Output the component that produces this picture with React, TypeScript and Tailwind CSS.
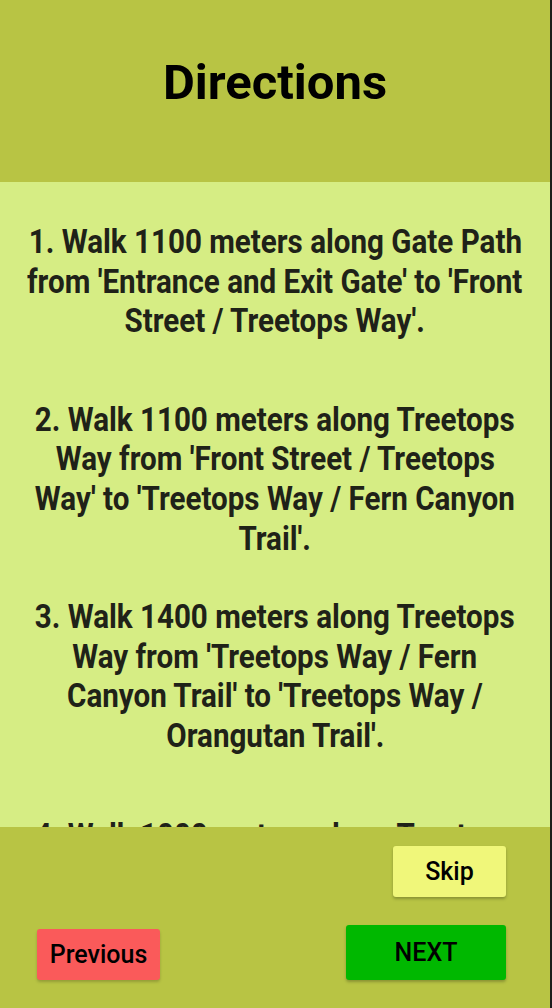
import React from "react";

const steps = [
  {
    mt: "mt-[40px]",
    lines: [
      "1. Walk 1100 meters along Gate Path",
      "from 'Entrance and Exit Gate' to 'Front",
      "Street / Treetops Way'.",
    ],
  },
  {
    mt: "mt-[59px]",
    lines: [
      "2. Walk 1100 meters along Treetops",
      "Way from 'Front Street / Treetops",
      "Way' to 'Treetops Way / Fern Canyon",
      "Trail'.",
    ],
  },
  {
    mt: "mt-[39px]",
    lines: [
      "3. Walk 1400 meters along Treetops",
      "Way from 'Treetops Way / Fern",
      "Canyon Trail' to 'Treetops Way /",
      "Orangutan Trail'.",
    ],
  },
  {
    mt: "mt-[60px]",
    lines: ["4. Walk 1000 meters along Treetops"],
  },
];

const App = () => {
  return (
    <div className="w-full h-[1008px] bg-[#1c1c1c] flex font-['Roboto',sans-serif]">
      <div className="w-[550px] h-full flex flex-col">
        <div className="h-[182px] bg-[#b8c444] pt-[53px] flex justify-center">
          <h1 className="text-[49px] leading-[59px] font-bold text-black">
            Directions
          </h1>
        </div>

        <div className="flex-1 bg-[#d6ed84] overflow-hidden">
          {steps.map((step, i) => (
            <div key={i} className={step.mt}>
              {step.lines.map((line, j) => (
                <div key={j} className="flex justify-center">
                  <span className="inline-block whitespace-nowrap text-[34px] leading-[39.6px] font-bold text-[#1f2218] scale-x-[0.87]">
                    {line}
                  </span>
                </div>
              ))}
            </div>
          ))}
        </div>

        <div className="h-[181px] bg-[#b8c444] flex flex-col pt-[19px]">
          <div className="flex justify-end pr-[44px]">
            <button className="w-[113px] h-[51px] bg-[#f0f77a] rounded-[3px] shadow-[0_2px_3px_rgba(0,0,0,0.25)] text-[25px] font-medium text-black">
              Skip
            </button>
          </div>
          <div className="flex items-end justify-between pl-[37px] pr-[44px] mt-[28px]">
            <button className="w-[123px] h-[51px] bg-[#fa5a5a] rounded-[3px] shadow-[0_2px_3px_rgba(0,0,0,0.2)] text-[25px] font-medium text-black">
              Previous
            </button>
            <button className="w-[160px] h-[55px] bg-[#00b800] rounded-[3px] shadow-[0_2px_3px_rgba(0,0,0,0.25)] text-[25px] font-medium text-black">
              NEXT
            </button>
          </div>
        </div>
      </div>
    </div>
  );
};

export default App;
